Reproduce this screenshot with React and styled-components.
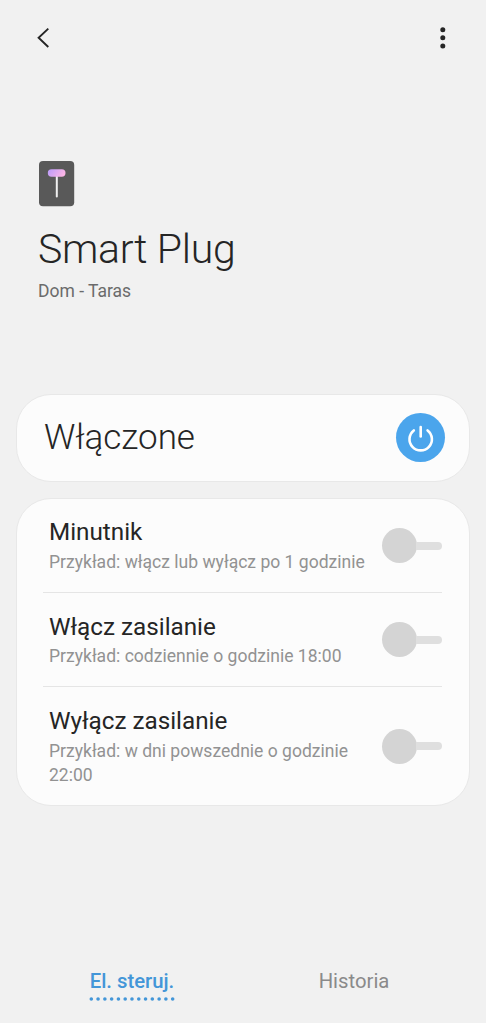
import styled, { createGlobalStyle } from 'styled-components';

const GlobalStyle = createGlobalStyle`
  * {
    box-sizing: border-box;
  }
  body {
    margin: 0;
    background: #f1f1f1;
    font-family: Roboto, 'Noto Sans', sans-serif;
    color: #252525;
  }
  button {
    padding: 0;
    border: 0;
    background: none;
    font: inherit;
    color: inherit;
  }
`;

const Screen = styled.div`
  width: 486px;
  height: 1023px;
  display: flex;
  flex-direction: column;
  overflow: hidden;
`;

const TopBar = styled.header`
  height: 76px;
  padding: 0 35px 0 30px;
  display: flex;
  align-items: center;
  justify-content: space-between;
`;

const IconButton = styled.button`
  display: flex;
`;

const Hero = styled.section`
  height: 318px;
  padding: 85px 38px 0;
`;

const DeviceIcon = styled.svg`
  display: block;
  margin-left: 1px;
`;

const DeviceName = styled.h1`
  margin: 18px 0 6px;
  font-size: 41px;
  line-height: 48px;
  font-weight: 300;
  letter-spacing: -0.3px;
  white-space: nowrap;
`;

const Location = styled.div`
  font-size: 17.5px;
  line-height: 24px;
  color: #6b6b6b;
`;

const Card = styled.section`
  margin: 0 16px 16px;
  border: 1px solid #e8e8e8;
  border-radius: 35px;
  background: #fcfcfc;
`;

const StatusCard = styled(Card)`
  height: 88px;
  padding: 0 24px 2px 27px;
  display: flex;
  align-items: center;
  justify-content: space-between;
`;

const StatusText = styled.div`
  padding-top: 2px;
  font-size: 35px;
  line-height: 40px;
  font-weight: 300;
`;

const PowerButton = styled.button`
  width: 49px;
  height: 49px;
  border-radius: 50%;
  background: #4ba5ec;
`;

const OptionsCard = styled(Card)`
  height: 308px;
  padding: 0 27px 0 26px;
`;

const Option = styled.div`
  height: ${props => props.$height}px;
  display: flex;
  justify-content: space-between;

  & + & {
    border-top: 1px solid #e5e5e5;
  }
`;

const OptionText = styled.div`
  width: 328px;
  padding: ${props => props.$top}px 0 0 6px;
`;

const OptionTitle = styled.div`
  font-size: 24.25px;
  line-height: 30px;
`;

const OptionHint = styled.div`
  margin-top: ${props => props.$gap}px;
  font-size: 17.55px;
  line-height: 24px;
  color: #929292;
`;

const Toggle = styled.button`
  flex: none;
  align-self: center;
  width: 60.5px;
  height: 35px;
  display: flex;
  align-items: center;

  &::before {
    content: '';
    width: 35px;
    height: 35px;
    border-radius: 50%;
    background: #d4d4d4;
  }
  &::after {
    content: '';
    flex: 1;
    height: 8px;
    margin-left: -1px;
    border-radius: 0 4px 4px 0;
    background: #dfdfdf;
  }
`;

const Tabs = styled.nav`
  margin-top: auto;
  height: 55px;
  padding: 0 21px;
  display: grid;
  grid-template-columns: 1fr 1fr;
  justify-items: center;
  align-items: start;
`;

const Tab = styled.button`
  display: flex;
  flex-direction: column;
  align-items: center;
  gap: 2px;
  font-size: 20.3px;
  line-height: 26px;
  font-weight: ${props => (props.$active ? 500 : 400)};
  color: ${props => (props.$active ? '#4396d8' : '#8a8a8a')};
`;

const DOTS = Array.from({ length: 13 }, (_, i) => i);

const OPTIONS = [
  { title: 'Minutnik', hint: 'Przykład: włącz lub wyłącz po 1 godzinie', height: 93, top: 18, gap: 3 },
  { title: 'Włącz zasilanie', hint: 'Przykład: codziennie o godzinie 18:00', height: 94, top: 19, gap: 2 },
  { title: 'Wyłącz zasilanie', hint: 'Przykład: w dni powszednie o godzinie 22:00', height: 119, top: 19, gap: 3 },
];

const BackIcon = () => (
  <svg width="26" height="26" viewBox="0 0 26 26" fill="none">
    <path d="M18.3 3.6 L8.6 12.8 L18.3 22" stroke="#252525" strokeWidth="1.9" />
  </svg>
);

const MoreIcon = () => (
  <svg width="16" height="26" viewBox="0 0 16 26" fill="#252525">
    <circle cx="7.8" cy="4.7" r="2.5" />
    <circle cx="7.8" cy="12.8" r="2.5" />
    <circle cx="7.8" cy="21" r="2.5" />
  </svg>
);

const PlugIcon = () => (
  <DeviceIcon width="36" height="46" viewBox="0 0 36 46">
    <defs>
      <linearGradient id="lamp" x1="0" y1="0" x2="1" y2="0.3">
        <stop offset="0" stopColor="#b99bfb" />
        <stop offset="1" stopColor="#fbb5e6" />
      </linearGradient>
    </defs>
    <rect width="35.2" height="45.3" rx="4" fill="#595959" />
    <path d="M17.8 14 V35.5" stroke="#f0f0f0" strokeWidth="2" strokeLinecap="round" />
    <rect x="8.8" y="8.3" width="17.7" height="7.4" rx="3.7" fill="url(#lamp)" />
  </DeviceIcon>
);

const PowerIcon = () => (
  <svg width="49" height="49" viewBox="0 0 49 49" fill="none" stroke="#fff" strokeWidth="2.6" strokeLinecap="round">
    <path d="M24.7 14 V23.4" />
    <path d="M17.8 17.4 A11.2 11.2 0 1 0 31.6 17.4" />
  </svg>
);

const App = () => (
  <>
    <GlobalStyle />
    <Screen>
      <TopBar>
        <IconButton aria-label="Wstecz">
          <BackIcon />
        </IconButton>
        <IconButton aria-label="Więcej">
          <MoreIcon />
        </IconButton>
      </TopBar>
      <Hero>
        <PlugIcon />
        <DeviceName>Smart Plug</DeviceName>
        <Location>Dom - Taras</Location>
      </Hero>
      <StatusCard>
        <StatusText>Włączone</StatusText>
        <PowerButton aria-label="Zasilanie">
          <PowerIcon />
        </PowerButton>
      </StatusCard>
      <OptionsCard>
        {OPTIONS.map(({ title, hint, height, top, gap }) => (
          <Option key={title} $height={height}>
            <OptionText $top={top}>
              <OptionTitle>{title}</OptionTitle>
              <OptionHint $gap={gap}>{hint}</OptionHint>
            </OptionText>
            <Toggle role="switch" aria-checked="false" aria-label={title} />
          </Option>
        ))}
      </OptionsCard>
      <Tabs>
        <Tab $active>
          El. steruj.
          <svg width="86" height="6" viewBox="0 0 86 6" fill="#4396d8">
            {DOTS.map(i => (
              <circle key={i} cx={2.3 + i * 6.78} cy="3" r="1.8" />
            ))}
          </svg>
        </Tab>
        <Tab>Historia</Tab>
      </Tabs>
    </Screen>
  </>
);

export default App;
